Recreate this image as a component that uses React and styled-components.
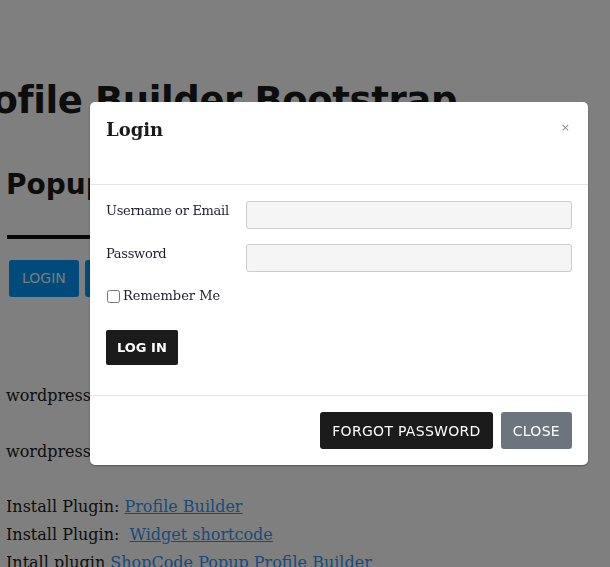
import React from 'react';
import styled, { createGlobalStyle } from 'styled-components';

const GlobalStyle = createGlobalStyle`
  html, body {
    margin: 0;
    padding: 0;
    background: #ffffff;
    overflow: hidden;
  }
  body {
    font-family: 'DejaVu Serif', 'Liberation Serif', serif;
    color: #1a1a1a;
  }
`;

const SANS = `'DejaVu Sans', 'Liberation Sans', sans-serif`;

const Page = styled.div`
  width: 610px;
  height: 567px;
  padding: 0 6px;
  box-sizing: border-box;
  overflow: hidden;
`;

const Title = styled.h1`
  font-family: ${SANS};
  font-weight: 700;
  font-size: 37px;
  letter-spacing: -0.4px;
  line-height: 1.2;
  white-space: nowrap;
  margin: 79px 0 0 -58px;
  color: #1a1a1a;
`;

const SubTitle = styled.h2`
  font-family: ${SANS};
  font-weight: 700;
  font-size: 28px;
  line-height: 1.2;
  margin: 45px 0 0 0;
  white-space: nowrap;
  color: #1a1a1a;
`;

const Divider = styled.div`
  width: 140px;
  height: 4px;
  background: #111;
  margin: 33px 0 0 1px;
`;

const ButtonRow = styled.div`
  display: flex;
  gap: 6px;
  margin: 21px 0 0 3px;
`;

const BlueButton = styled.button`
  font-family: ${SANS};
  font-size: 14px;
  height: 37px;
  padding: 0 13px;
  border: none;
  border-radius: 3px;
  background: #0096f8;
  color: #f4f4f4;
  text-transform: uppercase;
`;

const Paragraph = styled.p`
  font-size: 16px;
  line-height: 28px;
  margin: ${(p) => p.$top}px 0 0;
`;

const Steps = styled.ol`
  font-size: 16px;
  line-height: 28px;
  margin: 27px 0 0;
  padding: 0;
  list-style-position: outside;
`;

const Link = styled.a`
  color: #3694f4;
  text-decoration: underline;
`;

const Backdrop = styled.div`
  position: fixed;
  inset: 0;
  background: rgba(0, 0, 0, 0.5);
`;

const Modal = styled.div`
  position: absolute;
  left: 90px;
  top: 102px;
  width: 498px;
  background: #ffffff;
  border-radius: 5px;
  box-shadow: 0 1px 2px rgba(0, 0, 0, 0.35);
`;

const ModalHeader = styled.div`
  display: flex;
  justify-content: space-between;
  align-items: flex-start;
  padding: 14px 18px 41px 16px;
  border-bottom: 1px solid #e5e5e5;
`;

const ModalTitle = styled.h4`
  margin: 0;
  font-size: 18px;
  line-height: 27px;
  font-weight: 700;
  color: #1a1a1a;
`;

const CloseX = styled.span`
  font-family: ${SANS};
  font-size: 11px;
  line-height: 11px;
  margin-top: 6px;
  color: #8a8a8a;
`;

const ModalBody = styled.div`
  padding: 16px 16px 30px;
  border-bottom: 1px solid #e5e5e5;
`;

const FieldRow = styled.div`
  display: flex;
  align-items: flex-start;
  margin-bottom: 15px;
`;

const Label = styled.label`
  width: 140px;
  flex-shrink: 0;
  font-size: 13px;
  letter-spacing: -0.3px;
  line-height: 20px;
  color: #1e1e30;
`;

const Input = styled.input`
  flex: 1;
  height: 28px;
  box-sizing: border-box;
  background: #f5f5f5;
  border: 1px solid #cccccc;
  border-radius: 3px;
`;

const CheckRow = styled.label`
  display: flex;
  align-items: center;
  gap: 3px;
  font-size: 13px;
  line-height: 18px;
  color: #1e1e30;
  input {
    margin: 0 0 0 1px;
    width: 13px;
    height: 13px;
  }
`;

const SubmitButton = styled.button`
  margin-top: 25px;
  height: 35px;
  padding: 0 11px;
  border: none;
  border-radius: 2px;
  background: #1b1b1b;
  color: #ffffff;
  font-family: ${SANS};
  font-weight: 700;
  font-size: 13px;
`;

const ModalFooter = styled.div`
  display: flex;
  justify-content: flex-end;
  gap: 8px;
  padding: 16px;
`;

const FooterButton = styled.button`
  height: 37px;
  padding: 0 12px;
  border: none;
  border-radius: 3px;
  background: ${(p) => (p.$muted ? '#6c757d' : '#1b1b1b')};
  color: #ffffff;
  font-family: ${SANS};
  font-size: 14px;
  letter-spacing: 0.3px;
`;

export default function App() {
  return (
    <>
      <GlobalStyle />
      <Page>
        <Title>Profile Builder Bootstrap</Title>
        <SubTitle>Popup Login</SubTitle>
        <Divider />
        <ButtonRow>
          <BlueButton>Login</BlueButton>
          <BlueButton>Register</BlueButton>
        </ButtonRow>
        <Paragraph $top={85}>wordpress</Paragraph>
        <Paragraph $top={28}>wordpress</Paragraph>
        <Steps>
          <li>
            Install Plugin: <Link href="#">Profile Builder</Link>
          </li>
          <li>
            Install Plugin:&nbsp; <Link href="#">Widget shortcode</Link>
          </li>
          <li>
            Intall plugin <Link href="#">ShopCode Popup Profile Builder</Link>
          </li>
        </Steps>
      </Page>
      <Backdrop>
        <Modal>
          <ModalHeader>
            <ModalTitle>Login</ModalTitle>
            <CloseX>×</CloseX>
          </ModalHeader>
          <ModalBody>
            <FieldRow>
              <Label>Username or Email</Label>
              <Input type="text" />
            </FieldRow>
            <FieldRow>
              <Label>Password</Label>
              <Input type="password" />
            </FieldRow>
            <CheckRow>
              <input type="checkbox" />
              Remember Me
            </CheckRow>
            <SubmitButton>LOG IN</SubmitButton>
          </ModalBody>
          <ModalFooter>
            <FooterButton>FORGOT PASSWORD</FooterButton>
            <FooterButton $muted>CLOSE</FooterButton>
          </ModalFooter>
        </Modal>
      </Backdrop>
    </>
  );
}
